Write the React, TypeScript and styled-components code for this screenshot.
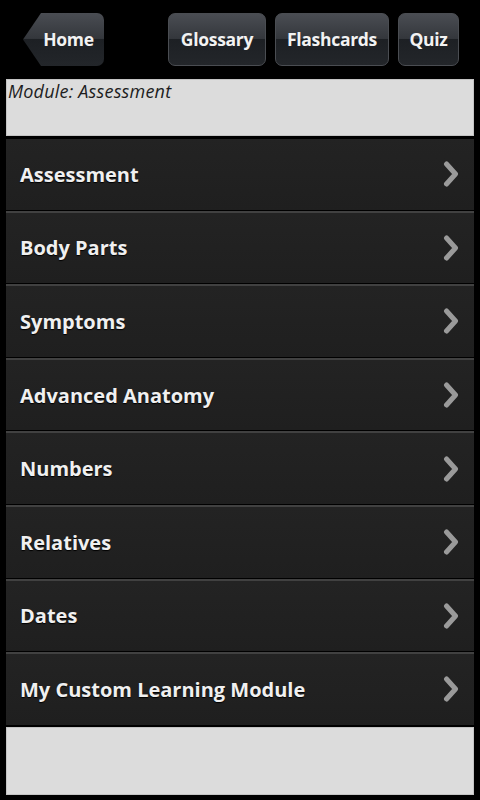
import React from 'react';
import styled, { createGlobalStyle } from 'styled-components';

const GlobalStyle = createGlobalStyle`
  html, body {
    margin: 0;
    padding: 0;
    background: #000;
  }
  body {
    font-family: "Open Sans", "DejaVu Sans", sans-serif;
  }
`;

const Screen = styled.div`
  width: 480px;
  height: 800px;
  background: #000;
  display: flex;
  flex-direction: column;
  overflow: hidden;
`;

const TopBar = styled.header`
  height: 79px;
  display: flex;
  align-items: flex-start;
  padding: 13px 21px 0 23px;
  box-sizing: border-box;
  gap: 9px;
`;

const Spacer = styled.div`
  flex: 1;
`;

const NavButton = styled.button<{ $width: number; $back?: boolean }>`
  width: ${p => p.$width}px;
  height: 53px;
  border: 1px solid #4a4d52;
  border-radius: 7px;
  background: linear-gradient(
    to bottom,
    #4a4d53 0%,
    #34373c 48%,
    #1d2024 50%,
    #23262a 100%
  );
  color: #f2f2f2;
  font-family: "Open Sans", "DejaVu Sans", sans-serif;
  font-weight: 700;
  font-size: 17.5px;
  letter-spacing: -0.3px;
  padding: 0 0 2px ${p => (p.$back ? 10 : 0)}px;
  display: flex;
  align-items: center;
  justify-content: center;
  box-sizing: border-box;
  ${p =>
    p.$back &&
    `
    border: none;
    border-radius: 0 7px 7px 0;
    clip-path: polygon(18px 0, 100% 0, 100% 100%, 18px 100%, 0 50%);
  `}
`;

const Content = styled.main`
  margin: 0 6px;
  flex: 1;
  display: flex;
  flex-direction: column;
`;

const InfoBox = styled.div`
  height: 57px;
  background: #dcdcdc;
  border: 1px solid #c4c4c4;
  box-sizing: border-box;
  padding: 0 0 0 1px;
  color: #1e1e1e;
  font-family: "Open Sans", "DejaVu Sans", sans-serif;
  font-style: italic;
  font-size: 18px;
  line-height: 22px;
  letter-spacing: 0.2px;
`;

const List = styled.ul`
  list-style: none;
  margin: 3px 0 0;
  padding: 0;
  display: flex;
  flex-direction: column;
  gap: 1px;
`;

const Row = styled.li<{ $first?: boolean }>`
  height: ${p => (p.$first ? 70.6 : 72.6)}px;
  box-sizing: border-box;
  border-top: ${p => (p.$first ? 'none' : '2px solid #414141')};
  background: linear-gradient(to bottom, #232323, #1f1f1f);
  display: flex;
  align-items: center;
  justify-content: space-between;
  padding: 0 14px 0 14px;
`;

const RowLabel = styled.span`
  color: #f0f0f0;
  font-family: "Open Sans", "DejaVu Sans", sans-serif;
  font-weight: 700;
  font-size: 20px;
  letter-spacing: 0;
  text-shadow: 0 1px 1px #000;
`;

const Chevron = () => (
  <svg width="17" height="26" viewBox="0 0 17 26">
    <path d="M3.5 3 L12.5 13 L3.5 23" fill="none" stroke="#9a9a9a" strokeWidth="5" strokeLinejoin="round" strokeLinecap="round" />
  </svg>
);

const Footer = styled.div`
  height: 68px;
  margin-top: 2px;
  background: #dcdcdc;
  border: 1px solid #c4c4c4;
  box-sizing: border-box;
`;

const modules = [
  'Assessment',
  'Body Parts',
  'Symptoms',
  'Advanced Anatomy',
  'Numbers',
  'Relatives',
  'Dates',
  'My Custom Learning Module',
];

export default function App() {
  return (
    <>
      <GlobalStyle />
      <Screen>
        <TopBar>
          <NavButton $width={81} $back>Home</NavButton>
          <Spacer />
          <NavButton $width={98}>Glossary</NavButton>
          <NavButton $width={114}>Flashcards</NavButton>
          <NavButton $width={61}>Quiz</NavButton>
        </TopBar>
        <Content>
          <InfoBox>Module: Assessment</InfoBox>
          <List>
            {modules.map((m, i) => (
              <Row key={m} $first={i === 0}>
                <RowLabel>{m}</RowLabel>
                <Chevron />
              </Row>
            ))}
          </List>
          <Footer />
        </Content>
      </Screen>
    </>
  );
}
